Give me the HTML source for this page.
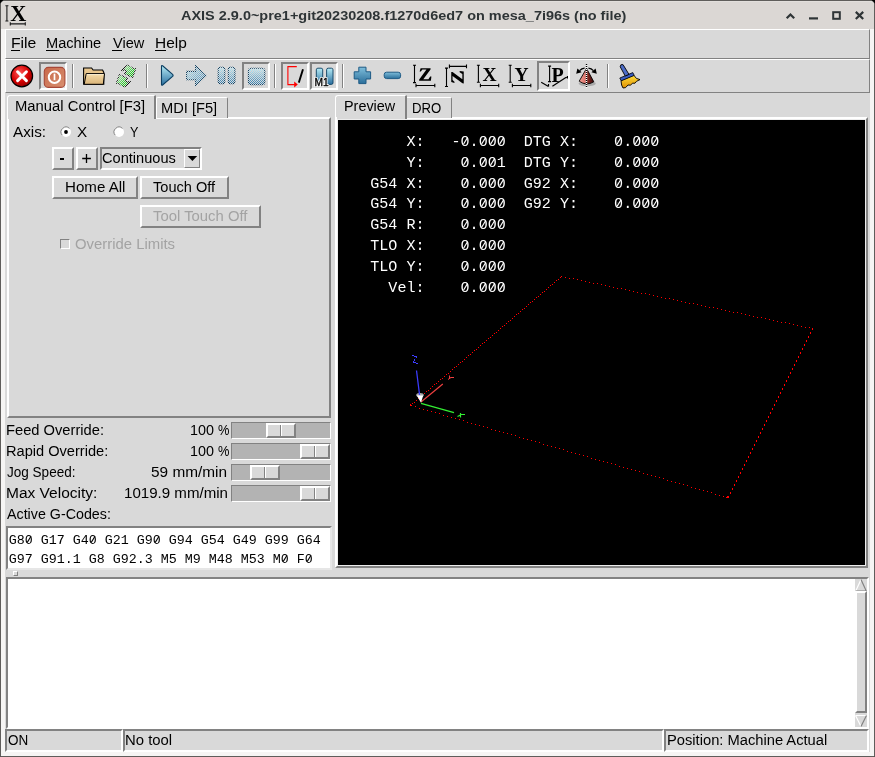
<!DOCTYPE html><html><head><meta charset="utf-8"><style>
html,body{margin:0;padding:0;width:875px;height:757px;overflow:hidden;background:#000}
body>div,body>svg{position:absolute;box-sizing:content-box}
.t{white-space:pre;line-height:20px;transform-origin:0 0}
svg{will-change:transform}
</style></head><body>
<div style="left:0;top:0;width:873px;height:755px;border:1px solid #5f5d5b;border-radius:5px 5px 0 0;background:#f6f5f4"></div>
<div style="left:1px;top:1px;width:873px;height:28px;border-radius:4px 4px 0 0;background:#dbd7d4;box-shadow:inset 0 1px 0 #e2dfdc"></div>
<svg style="position:absolute;left:0px;top:0px" width="40" height="29" viewBox="0 0 40 29"><text transform="translate(10.2,21) scale(0.93,1)" x="0" y="0" font-family="Liberation Serif" font-weight="bold" font-size="24" fill="#000">X</text>
<path d="M6.9 5.2v16.2M5.4 5.7h3M5.4 21h3M9.8 23.9h15.8M10.3 22.3v3.2M25.3 22.3v3.2" stroke="#1a1a1a" stroke-width="1.1" fill="none"/></svg>
<svg style="position:absolute;left:780px;top:5px" width="90" height="20" viewBox="0 0 90 20"><g stroke="#2e3436" stroke-width="2.2" fill="none" stroke-linecap="butt">
<path d="M6.7 13.3L10.45 9.5l3.75 3.8"/>
<path d="M29 13.4h9"/>
<rect x="53.2" y="7.2" width="6.6" height="6.6" stroke-width="2"/>
<path d="M75.8 6.9l7.4 7.1M83.2 6.9L75.8 14"/></g></svg>
<div style="left:5px;top:29px;width:865px;height:723px;background:#d9d9d9;"></div>
<div style="left:5px;top:29px;width:863px;height:28px;border:1px solid;border-color:#ffffff #828282 #828282 #ffffff;"></div>
<div style="left:11px;top:50px;width:9px;height:1px;background:#000;"></div>
<div style="left:46px;top:50px;width:13px;height:1px;background:#000;"></div>
<div style="left:112px;top:50px;width:10px;height:1px;background:#000;"></div>
<div style="left:155px;top:50px;width:11px;height:1px;background:#000;"></div>
<div style="left:5px;top:59px;width:863px;height:32px;border:1px solid;border-color:#ffffff #828282 #828282 #ffffff;"></div>
<div style="left:7px;top:117px;width:320px;height:297px;border:2px solid;border-color:#ffffff #828282 #828282 #ffffff;"></div>
<div style="left:7px;top:95px;width:146px;height:23px;background:#d9d9d9;border-top:1px solid #fff;border-left:1px solid #fff;border-right:2px solid #828282;border-top-left-radius:3px;border-top-right-radius:1px"></div>
<div style="left:8px;top:117px;width:146px;height:2px;background:#d9d9d9;"></div>
<div style="left:156px;top:97px;width:70px;height:20px;background:#d9d9d9;border-top:1px solid #fff;border-left:1px solid #fff;border-right:1px solid #828282;border-top-left-radius:2px;border-top-right-radius:2px"></div>
<svg style="position:absolute;left:59px;top:125px" width="14" height="14" viewBox="0 0 14 14"><circle cx="7" cy="7" r="5" fill="#fff"/><path d="M3.2 10.2A5 5 0 0 1 10.5 3.4" stroke="#828282" stroke-width="1" fill="none"/><circle cx="7" cy="7" r="1.9" fill="#000"/></svg>
<svg style="position:absolute;left:112px;top:125px" width="14" height="14" viewBox="0 0 14 14"><circle cx="7" cy="7" r="5" fill="#fff"/><path d="M3.2 10.2A5 5 0 0 1 10.5 3.4" stroke="#828282" stroke-width="1" fill="none"/></svg>
<div style="left:52px;top:147px;width:18px;height:19px;border:2px solid;border-color:#ffffff #828282 #828282 #ffffff;"></div>
<div style="left:60px;top:158px;width:4px;height:1.5px;background:#000;"></div>
<div style="left:76px;top:147px;width:18px;height:19px;border:2px solid;border-color:#ffffff #828282 #828282 #ffffff;"></div>
<svg style="position:absolute;left:76px;top:147px" width="22" height="23" viewBox="0 0 22 23"><path d="M6.2 11.5h8.7M10.5 7v9" stroke="#000" stroke-width="1.3"/></svg>
<div style="left:100px;top:147px;width:98px;height:19px;border:2px solid;border-color:#828282 #ffffff #ffffff #828282;"></div>
<div style="left:184px;top:149px;width:14px;height:17px;border:1px solid;border-color:#ffffff #828282 #828282 #ffffff;"></div>
<svg style="position:absolute;left:184px;top:149px" width="16" height="19" viewBox="0 0 16 19"><path d="M3.6 7h9.6l-4.8 5z" fill="#000"/></svg>
<div style="left:52px;top:176px;width:82px;height:19px;border:2px solid;border-color:#ffffff #828282 #828282 #ffffff;"></div>
<div style="left:140px;top:176px;width:85px;height:19px;border:2px solid;border-color:#ffffff #828282 #828282 #ffffff;"></div>
<div style="left:140px;top:205px;width:117px;height:19px;border:2px solid;border-color:#ffffff #828282 #828282 #ffffff;"></div>
<div style="left:60px;top:239px;width:8px;height:8px;border:1px solid;border-color:#828282 #ffffff #ffffff #828282;"></div>
<div style="left:231px;top:422px;width:98px;height:15px;border:1px solid;border-color:#828282 #ffffff #ffffff #828282;background:#b3b3b3;"></div>
<div style="left:266px;top:423px;width:26px;height:11px;border:2px solid;border-color:#ffffff #828282 #828282 #ffffff;background:#d9d9d9;"></div>
<div style="left:280px;top:425px;width:1px;height:11px;background:#828282;"></div>
<div style="left:281px;top:425px;width:1px;height:11px;background:#ffffff;"></div>
<div style="left:231px;top:443px;width:98px;height:15px;border:1px solid;border-color:#828282 #ffffff #ffffff #828282;background:#b3b3b3;"></div>
<div style="left:300px;top:444px;width:26px;height:11px;border:2px solid;border-color:#ffffff #828282 #828282 #ffffff;background:#d9d9d9;"></div>
<div style="left:314px;top:446px;width:1px;height:11px;background:#828282;"></div>
<div style="left:315px;top:446px;width:1px;height:11px;background:#ffffff;"></div>
<div style="left:231px;top:464px;width:98px;height:15px;border:1px solid;border-color:#828282 #ffffff #ffffff #828282;background:#b3b3b3;"></div>
<div style="left:250px;top:465px;width:26px;height:11px;border:2px solid;border-color:#ffffff #828282 #828282 #ffffff;background:#d9d9d9;"></div>
<div style="left:264px;top:467px;width:1px;height:11px;background:#828282;"></div>
<div style="left:265px;top:467px;width:1px;height:11px;background:#ffffff;"></div>
<div style="left:231px;top:485px;width:98px;height:15px;border:1px solid;border-color:#828282 #ffffff #ffffff #828282;background:#b3b3b3;"></div>
<div style="left:300px;top:486px;width:26px;height:11px;border:2px solid;border-color:#ffffff #828282 #828282 #ffffff;background:#d9d9d9;"></div>
<div style="left:314px;top:488px;width:1px;height:11px;background:#828282;"></div>
<div style="left:315px;top:488px;width:1px;height:11px;background:#ffffff;"></div>
<div style="left:6px;top:526px;width:322px;height:40px;border:2px solid;border-color:#828282 #e6e6e6 #e6e6e6 #828282;background:#fff;"></div>
<div style="left:13px;top:571px;width:3px;height:3px;border:1px solid;border-color:#ffffff #828282 #828282 #ffffff;"></div>
<div style="left:335px;top:117px;width:529px;height:447px;border:2px solid;border-color:#ffffff #828282 #828282 #ffffff;"></div>
<div style="left:337px;top:119px;width:529px;height:447px;background:#ececec;"></div>
<div style="left:338px;top:120px;width:527px;height:445px;background:#000;"></div>
<div style="left:335px;top:95px;width:69px;height:23px;background:#d9d9d9;border-top:1px solid #fff;border-left:1px solid #fff;border-right:2px solid #828282;border-top-left-radius:3px;border-top-right-radius:1px"></div>
<div style="left:336px;top:117px;width:69px;height:2px;background:#d9d9d9;"></div>
<div style="left:335px;top:117px;width:2px;height:3px;background:#fff;"></div>
<div style="left:407px;top:97px;width:44px;height:20px;background:#d9d9d9;border-top:1px solid #fff;border-right:1px solid #828282;border-top-right-radius:2px"></div>
<div style="left:6px;top:577px;width:859px;height:148px;border:2px solid;border-color:#828282 #ffffff #ffffff #828282;background:#fff;"></div>
<div style="left:855px;top:579px;width:12px;height:148px;background:#d9d9d9;"></div>
<svg style="position:absolute;left:855px;top:579px" width="12" height="13" viewBox="0 0 12 13"><path d="M0.5 12.5L6 0.5L11.5 12.5z" fill="#d9d9d9"/><path d="M0.5 12.5L6 0.5" stroke="#fff" stroke-width="1.2"/><path d="M6 0.5L11.5 12.5M0.5 12h11" stroke="#828282" stroke-width="1.2"/></svg>
<div style="left:855px;top:591px;width:8px;height:118px;border:2px solid;border-color:#ffffff #828282 #828282 #ffffff;background:#d9d9d9;"></div>
<svg style="position:absolute;left:855px;top:715px" width="12" height="12" viewBox="0 0 12 12"><path d="M0.5 0.5L6 11.5L11.5 0.5z" fill="#d9d9d9"/><path d="M0.5 0.5L6 11.5M0.5 0.5h11" stroke="#fff" stroke-width="1.2"/><path d="M11.5 0.5L6 11.5" stroke="#828282" stroke-width="1.2"/></svg>
<div style="left:5px;top:729px;width:114px;height:19px;border:2px solid;border-color:#828282 #ffffff #ffffff #828282;"></div>
<div style="left:123px;top:729px;width:537px;height:19px;border:2px solid;border-color:#828282 #ffffff #ffffff #828282;"></div>
<div style="left:664px;top:729px;width:201px;height:19px;border:2px solid;border-color:#828282 #ffffff #ffffff #828282;"></div>
<svg style="position:absolute;left:0;top:0" width="875" height="757" viewBox="0 0 875 757"><path d="M410 404h1v1h-1zM410 405h1v1h-1zM411 405h1v1h-1zM412 403h1v1h-1zM414 402h1v1h-1zM415 406h1v1h-1zM416 400h1v1h-1zM418 398h1v1h-1zM419 408h1v1h-1zM420 396h1v1h-1zM422 395h1v1h-1zM423 409h1v1h-1zM424 393h1v1h-1zM426 391h1v1h-1zM427 410h1v1h-1zM428 390h1v1h-1zM430 388h1v1h-1zM431 411h1v1h-1zM432 386h1v1h-1zM434 384h1v1h-1zM435 412h1v1h-1zM436 383h1v1h-1zM438 381h1v1h-1zM439 413h1v1h-1zM440 379h1v1h-1zM442 378h1v1h-1zM443 415h1v1h-1zM444 376h1v1h-1zM446 374h1v1h-1zM447 416h1v1h-1zM448 373h1v1h-1zM450 371h1v1h-1zM451 417h1v1h-1zM452 369h1v1h-1zM454 367h1v1h-1zM455 418h1v1h-1zM456 366h1v1h-1zM458 364h1v1h-1zM459 419h1v1h-1zM460 362h1v1h-1zM462 361h1v1h-1zM463 420h1v1h-1zM464 359h1v1h-1zM466 357h1v1h-1zM467 422h1v1h-1zM468 355h1v1h-1zM470 354h1v1h-1zM471 423h1v1h-1zM472 352h1v1h-1zM474 350h1v1h-1zM475 424h1v1h-1zM476 349h1v1h-1zM478 347h1v1h-1zM479 425h1v1h-1zM480 345h1v1h-1zM482 343h1v1h-1zM483 426h1v1h-1zM484 342h1v1h-1zM486 340h1v1h-1zM487 427h1v1h-1zM488 338h1v1h-1zM490 337h1v1h-1zM491 429h1v1h-1zM492 335h1v1h-1zM494 333h1v1h-1zM495 430h1v1h-1zM496 332h1v1h-1zM498 330h1v1h-1zM499 431h1v1h-1zM500 328h1v1h-1zM502 326h1v1h-1zM503 432h1v1h-1zM504 325h1v1h-1zM506 323h1v1h-1zM507 433h1v1h-1zM508 321h1v1h-1zM510 320h1v1h-1zM511 434h1v1h-1zM512 318h1v1h-1zM514 316h1v1h-1zM515 435h1v1h-1zM516 314h1v1h-1zM518 313h1v1h-1zM519 437h1v1h-1zM520 311h1v1h-1zM522 309h1v1h-1zM523 438h1v1h-1zM524 308h1v1h-1zM526 306h1v1h-1zM527 439h1v1h-1zM528 304h1v1h-1zM530 302h1v1h-1zM531 440h1v1h-1zM532 301h1v1h-1zM534 299h1v1h-1zM535 441h1v1h-1zM536 297h1v1h-1zM538 296h1v1h-1zM539 442h1v1h-1zM540 294h1v1h-1zM542 292h1v1h-1zM543 444h1v1h-1zM544 291h1v1h-1zM546 289h1v1h-1zM547 445h1v1h-1zM548 287h1v1h-1zM550 285h1v1h-1zM551 446h1v1h-1zM552 284h1v1h-1zM554 282h1v1h-1zM555 447h1v1h-1zM556 280h1v1h-1zM558 279h1v1h-1zM559 448h1v1h-1zM560 277h1v1h-1zM561 276h1v1h-1zM563 449h1v1h-1zM565 277h1v1h-1zM567 451h1v1h-1zM569 278h1v1h-1zM571 452h1v1h-1zM573 278h1v1h-1zM575 453h1v1h-1zM577 279h1v1h-1zM579 454h1v1h-1zM581 280h1v1h-1zM583 455h1v1h-1zM585 281h1v1h-1zM587 456h1v1h-1zM589 282h1v1h-1zM591 458h1v1h-1zM593 283h1v1h-1zM595 459h1v1h-1zM597 283h1v1h-1zM599 460h1v1h-1zM601 284h1v1h-1zM603 461h1v1h-1zM605 285h1v1h-1zM607 462h1v1h-1zM609 286h1v1h-1zM611 463h1v1h-1zM613 287h1v1h-1zM615 464h1v1h-1zM617 288h1v1h-1zM619 466h1v1h-1zM621 288h1v1h-1zM623 467h1v1h-1zM625 289h1v1h-1zM627 468h1v1h-1zM629 290h1v1h-1zM631 469h1v1h-1zM633 291h1v1h-1zM635 470h1v1h-1zM637 292h1v1h-1zM639 471h1v1h-1zM641 293h1v1h-1zM643 473h1v1h-1zM645 293h1v1h-1zM647 474h1v1h-1zM649 294h1v1h-1zM651 475h1v1h-1zM653 295h1v1h-1zM655 476h1v1h-1zM657 296h1v1h-1zM659 477h1v1h-1zM661 297h1v1h-1zM663 478h1v1h-1zM665 298h1v1h-1zM667 480h1v1h-1zM669 298h1v1h-1zM671 481h1v1h-1zM673 299h1v1h-1zM675 482h1v1h-1zM677 300h1v1h-1zM679 483h1v1h-1zM681 301h1v1h-1zM683 484h1v1h-1zM685 302h1v1h-1zM687 485h1v1h-1zM689 303h1v1h-1zM691 487h1v1h-1zM693 303h1v1h-1zM695 488h1v1h-1zM697 304h1v1h-1zM699 489h1v1h-1zM701 305h1v1h-1zM703 490h1v1h-1zM705 306h1v1h-1zM707 491h1v1h-1zM709 307h1v1h-1zM711 492h1v1h-1zM713 307h1v1h-1zM715 494h1v1h-1zM717 308h1v1h-1zM719 495h1v1h-1zM721 309h1v1h-1zM723 496h1v1h-1zM725 310h1v1h-1zM726 497h1v1h-1zM727 496h1v1h-1zM727 497h1v1h-1zM728 496h1v1h-1zM728 497h1v1h-1zM729 311h1v1h-1zM730 492h1v1h-1zM730 493h1v1h-1zM732 488h1v1h-1zM732 489h1v1h-1zM733 312h1v1h-1zM734 484h1v1h-1zM734 485h1v1h-1zM736 480h1v1h-1zM736 481h1v1h-1zM737 312h1v1h-1zM738 476h1v1h-1zM738 477h1v1h-1zM740 472h1v1h-1zM740 473h1v1h-1zM741 313h1v1h-1zM742 468h1v1h-1zM742 469h1v1h-1zM744 464h1v1h-1zM744 465h1v1h-1zM745 314h1v1h-1zM746 460h1v1h-1zM746 461h1v1h-1zM748 456h1v1h-1zM748 457h1v1h-1zM749 315h1v1h-1zM750 452h1v1h-1zM750 453h1v1h-1zM752 448h1v1h-1zM752 449h1v1h-1zM753 316h1v1h-1zM754 444h1v1h-1zM754 445h1v1h-1zM756 440h1v1h-1zM756 441h1v1h-1zM757 317h1v1h-1zM758 436h1v1h-1zM758 437h1v1h-1zM760 432h1v1h-1zM760 433h1v1h-1zM761 317h1v1h-1zM762 428h1v1h-1zM762 429h1v1h-1zM764 424h1v1h-1zM764 425h1v1h-1zM765 318h1v1h-1zM766 420h1v1h-1zM766 421h1v1h-1zM768 416h1v1h-1zM768 417h1v1h-1zM769 319h1v1h-1zM770 412h1v1h-1zM770 413h1v1h-1zM772 408h1v1h-1zM772 409h1v1h-1zM773 320h1v1h-1zM774 404h1v1h-1zM774 405h1v1h-1zM776 400h1v1h-1zM776 401h1v1h-1zM777 321h1v1h-1zM778 396h1v1h-1zM778 397h1v1h-1zM780 392h1v1h-1zM780 393h1v1h-1zM781 322h1v1h-1zM782 388h1v1h-1zM782 389h1v1h-1zM784 384h1v1h-1zM784 385h1v1h-1zM785 322h1v1h-1zM786 380h1v1h-1zM786 381h1v1h-1zM788 376h1v1h-1zM788 377h1v1h-1zM789 323h1v1h-1zM790 372h1v1h-1zM790 373h1v1h-1zM792 368h1v1h-1zM792 369h1v1h-1zM793 324h1v1h-1zM794 364h1v1h-1zM794 365h1v1h-1zM796 360h1v1h-1zM796 361h1v1h-1zM797 325h1v1h-1zM798 356h1v1h-1zM798 357h1v1h-1zM800 352h1v1h-1zM800 353h1v1h-1zM801 326h1v1h-1zM802 348h1v1h-1zM802 349h1v1h-1zM804 344h1v1h-1zM804 345h1v1h-1zM805 327h1v1h-1zM806 340h1v1h-1zM806 341h1v1h-1zM808 336h1v1h-1zM808 337h1v1h-1zM809 327h1v1h-1zM810 332h1v1h-1zM810 333h1v1h-1zM812 328h1v1h-1zM812 329h1v1h-1z" fill="#ff0000"/><path d="M416.5 370.5L419.5 394.5" stroke="#3c3cff" stroke-width="1.2" fill="none"/><path d="M412 355.5h2M414 356.5h3M416.5 357v1M415.5 358.5v0.1M414.5 359v2M413.5 361v2M414 362.5h2M416 363.5h2" stroke="#3c3cff" stroke-width="1" fill="none"/><path d="M421 402L442.8 384" stroke="#f04040" stroke-width="1.1" fill="none"/><path d="M449.5 375.5v2.5M448 379.5l3-2M450.5 377.5h3.5" stroke="#f04040" stroke-width="1" fill="none"/><path d="M421 403.3L454 412.6" stroke="#33ee33" stroke-width="1.3" fill="none"/><path d="M460.5 413v4.5M457.5 416.5l3-1.5M460.5 414.5h4.5" stroke="#33ee33" stroke-width="1.2" fill="none"/><ellipse cx="420" cy="395" rx="3.8" ry="2" fill="#a8a8a8"/><path d="M416.8 395.6L423.2 395.6L421 402.8z" fill="#ffffff"/><path d="M419.4 392.5v2.5" stroke="#3c3cff" stroke-width="1.2"/></svg>
<div style="left:39px;top:62px;width:24px;height:24px;border:2px solid;border-color:#828282 #ffffff #ffffff #828282;"></div>
<div style="left:242px;top:62px;width:24px;height:24px;border:2px solid;border-color:#828282 #ffffff #ffffff #828282;"></div>
<div style="left:281px;top:62px;width:24px;height:24px;border:2px solid;border-color:#828282 #ffffff #ffffff #828282;"></div>
<div style="left:310px;top:62px;width:24px;height:24px;border:2px solid;border-color:#828282 #ffffff #ffffff #828282;"></div>
<div style="left:537px;top:61px;width:29px;height:26px;border:2px solid;border-color:#828282 #ffffff #ffffff #828282;"></div>
<div style="left:72px;top:64px;width:1px;height:24px;background:#828282;"></div>
<div style="left:73px;top:64px;width:1px;height:24px;background:#ffffff;"></div>
<div style="left:146px;top:64px;width:1px;height:24px;background:#828282;"></div>
<div style="left:147px;top:64px;width:1px;height:24px;background:#ffffff;"></div>
<div style="left:274px;top:64px;width:1px;height:24px;background:#828282;"></div>
<div style="left:275px;top:64px;width:1px;height:24px;background:#ffffff;"></div>
<div style="left:342px;top:64px;width:1px;height:24px;background:#828282;"></div>
<div style="left:343px;top:64px;width:1px;height:24px;background:#ffffff;"></div>
<div style="left:607px;top:64px;width:1px;height:24px;background:#828282;"></div>
<div style="left:608px;top:64px;width:1px;height:24px;background:#ffffff;"></div>
<svg style="position:absolute;left:0;top:0" width="875" height="100" viewBox="0 0 875 100"><defs>
<pattern id="chk" patternUnits="userSpaceOnUse" width="2" height="2"><rect x="0" y="0" width="1" height="1" fill="#fff"/><rect x="1" y="1" width="1" height="1" fill="#fff"/></pattern>
<mask id="stip" maskUnits="userSpaceOnUse" x="0" y="0" width="875" height="757"><rect x="0" y="0" width="875" height="757" fill="url(#chk)"/></mask>
<pattern id="chk2" patternUnits="userSpaceOnUse" width="2" height="2"><rect x="1" y="0" width="1" height="1" fill="#fff"/><rect x="0" y="1" width="1" height="1" fill="#fff"/></pattern>
<mask id="stip2" maskUnits="userSpaceOnUse" x="0" y="0" width="875" height="757"><rect x="0" y="0" width="875" height="757" fill="url(#chk2)"/></mask>
<linearGradient id="gStip" x1="0" y1="0" x2="0" y2="1"><stop offset="0" stop-color="#c4f0fa"/><stop offset="1" stop-color="#2d78ab"/></linearGradient>
<linearGradient id="gStipD" x1="0" y1="0" x2="1" y2="1"><stop offset="0" stop-color="#c4f0fa"/><stop offset="1" stop-color="#2d78ab"/></linearGradient>
<linearGradient id="gPlay" x1="0" y1="0" x2="0" y2="1"><stop offset="0" stop-color="#b6ecf6"/><stop offset="1" stop-color="#2a6e9e"/></linearGradient>
<linearGradient id="gGreen" x1="0" y1="0" x2="1" y2="1"><stop offset="0" stop-color="#c8f5c8"/><stop offset="0.6" stop-color="#2ad42a"/><stop offset="1" stop-color="#00b000"/></linearGradient>
<radialGradient id="gRed" cx="0.4" cy="0.35" r="0.7"><stop offset="0" stop-color="#ff5a5a"/><stop offset="0.6" stop-color="#d40000"/><stop offset="1" stop-color="#8a0000"/></radialGradient>
<linearGradient id="gPow" x1="0" y1="0" x2="1" y2="1"><stop offset="0" stop-color="#c8684a"/><stop offset="1" stop-color="#d89070"/></linearGradient>
<linearGradient id="gBlue" x1="0" y1="0" x2="1" y2="1"><stop offset="0" stop-color="#9fd3ea"/><stop offset="1" stop-color="#1d5f8e"/></linearGradient>
<linearGradient id="gBlueV" x1="0" y1="0" x2="0" y2="1"><stop offset="0" stop-color="#7fbedb"/><stop offset="1" stop-color="#2a6e9a"/></linearGradient>
<linearGradient id="gFold" x1="0" y1="0" x2="0" y2="1"><stop offset="0" stop-color="#f6dcaa"/><stop offset="1" stop-color="#d9b478"/></linearGradient>
<linearGradient id="gCone" x1="0" y1="0" x2="1" y2="0"><stop offset="0" stop-color="#f4a096"/><stop offset="0.45" stop-color="#d87068"/><stop offset="0.55" stop-color="#8a2a22"/><stop offset="1" stop-color="#3a0808"/></linearGradient>
<linearGradient id="gBrush" x1="0" y1="0" x2="0" y2="1"><stop offset="0" stop-color="#ffe040"/><stop offset="1" stop-color="#e09000"/></linearGradient>
</defs><circle cx="21.8" cy="76" r="10.8" fill="url(#gRed)" stroke="#000" stroke-width="1.2"/><path d="M17.6 71.8L26.4 80.6M26.4 71.8L17.6 80.6" stroke="#fff" stroke-width="3" stroke-linecap="round"/><rect x="44.3" y="67.4" width="20.6" height="20" rx="4" fill="url(#gPow)" stroke="#a84838" stroke-width="1.1"/><circle cx="54.5" cy="77.3" r="5.7" fill="none" stroke="#fff" stroke-width="2"/><path d="M54.5 73.6v6.6" stroke="#fff" stroke-width="1.7"/><path d="M83.6 68h8l1.5 2h9.5l1.2 2.5V84.3H83.6z" fill="#e8c68e" stroke="#000" stroke-width="1.1"/><path d="M86.2 73.6h18.3l-1.2 10.7H84.2z" fill="url(#gFold)" stroke="#000" stroke-width="1"/><path d="M86.8 74.6h16.8" stroke="#fff6e0" stroke-width="0.8"/><g mask="url(#stip2)"><path d="M121.4 70.6L126.6 65.3L128.8 65.3L133.4 68.6L135.8 68.6L132.6 77.6L124.4 73.6L126.4 71.6L124.4 69.6L123.2 70.6Z" fill="url(#gGreen)" stroke="#111" stroke-width="1"/><path d="M130.6 81.4L125.4 86.7L123.2 86.7L118.6 83.4L116.2 83.4L119.4 74.4L127.6 78.4L125.6 80.4L127.6 82.4L128.8 81.4Z" fill="url(#gGreen)" stroke="#111" stroke-width="1"/></g><path d="M161.5 66.2Q161.5 65 162.6 65.8L172.6 74.4Q173.6 75.4 172.6 76.4L162.6 85Q161.5 85.8 161.5 84.6z" fill="url(#gPlay)" stroke="#0b3f62" stroke-width="1.1"/><path d="M186.6 71.4h9v-5.6l10.6 9.6-10.6 10.2v-5.8h-9z" fill="url(#gStipD)" stroke="#0b3f62" stroke-width="1.1" mask="url(#stip)"/><g mask="url(#stip)"><rect x="218.2" y="67.2" width="6.6" height="16.6" rx="2" fill="url(#gStip)" stroke="#0b3f62" stroke-width="1.1"/><rect x="228.3" y="67.2" width="6.6" height="16.6" rx="2" fill="url(#gStip)" stroke="#0b3f62" stroke-width="1.1"/></g><rect x="248.4" y="68.3" width="16.4" height="16.4" rx="2.5" fill="url(#gStip)" stroke="#0b3f62" stroke-width="1.1" mask="url(#stip)"/><path d="M296.8 66.6h-8.9v18h7.4" stroke="#ff0000" stroke-width="1.1" fill="none"/><path d="M294.2 81.6l3.6 3-3.6 3z" fill="#ff0000"/><path d="M303 69.3L298.8 82.6" stroke="#000" stroke-width="1.9"/><rect x="316.3" y="68.2" width="6.4" height="16.2" rx="1.6" fill="url(#gPlay)" stroke="#0b3f62" stroke-width="0.9"/><rect x="326.6" y="68.2" width="6.4" height="16.2" rx="1.6" fill="url(#gPlay)" stroke="#0b3f62" stroke-width="0.9"/><text x="314.4" y="85.6" font-family="Liberation Sans" font-size="10.2" fill="#fff" stroke="#fff" stroke-width="2" stroke-linejoin="round">M1</text><text x="314.4" y="85.6" font-family="Liberation Sans" font-size="10.2" fill="#000" stroke="#000" stroke-width="0.35">M1</text><path d="M358.8 67.2h7.2v4.6h4.6v7.2h-4.6v4.6h-7.2v-4.6h-4.6v-7.2h4.6z" fill="url(#gBlueV)" stroke="#1d5a85" stroke-width="1" stroke-linejoin="round"/><rect x="384.2" y="72.2" width="16.4" height="6.4" rx="2.4" fill="url(#gBlueV)" stroke="#1d5a85" stroke-width="1"/><path d="M414.5 65.2v17.39999999999999M413.0 65.2h3M413.0 82.6h3" stroke="#000" stroke-width="1.1" fill="none"/><path d="M416 85.5h18.80000000000001M416 83.7v3.6M434.8 83.7v3.6" stroke="#000" stroke-width="1.1" fill="none"/><path d="M420.6 68.2H430.6L430.5 69.5L423.3 79.3H428.4L430.2 76.6H431.4L430.9 80.7H419.1L419.2 79.4L426.5 69.5H422.4L420.8 71.4H419.6Z" fill="#000"/><path d="M446.5 68.1v18.400000000000006M445.0 68.1h3M445.0 86.5h3" stroke="#000" stroke-width="1.1" fill="none"/><path d="M449.4 66.4h17.100000000000023M449.4 64.60000000000001v3.6M466.5 64.60000000000001v3.6" stroke="#000" stroke-width="1.1" fill="none"/><path transform="translate(457.45,77.2) rotate(-90) translate(-425.3,-74.4)" d="M420.6 68.2H430.6L430.5 69.5L423.3 79.3H428.4L430.2 76.6H431.4L430.9 80.7H419.1L419.2 79.4L426.5 69.5H422.4L420.8 71.4H419.6Z" fill="#000"/><path d="M478.4 65.3v17.0M476.9 65.3h3M476.9 82.3h3" stroke="#000" stroke-width="1.1" fill="none"/><path d="M480.4 85.5h18.30000000000001M480.4 83.7v3.6M498.7 83.7v3.6" stroke="#000" stroke-width="1.1" fill="none"/><text x="482.6" y="80.8" font-family="Liberation Serif" font-weight="bold" font-size="19.5" fill="#000">X</text><path d="M510.2 65.3v17.0M508.7 65.3h3M508.7 82.3h3" stroke="#000" stroke-width="1.1" fill="none"/><path d="M512.4 85.5h18.399999999999977M512.4 83.7v3.6M530.8 83.7v3.6" stroke="#000" stroke-width="1.1" fill="none"/><text x="514.6" y="80.8" font-family="Liberation Serif" font-weight="bold" font-size="19.5" fill="#000">Y</text><path d="M549.6 66.1v15.5M548.1 66.1h3M548.1 81.6h3" stroke="#000" stroke-width="1.1" fill="none"/><text x="551.6" y="81.6" font-family="Liberation Serif" font-weight="bold" font-size="20" fill="#000">P</text><path d="M541.2 82.2l7.3 4.2M548.5 84v2.6M552.4 86.2l15-9.8M567.4 76v2.4" stroke="#000" stroke-width="1.2" fill="none"/><ellipse cx="587.2" cy="83.6" rx="8.6" ry="2.6" fill="#000" opacity="0.22"/><path d="M586.5 68.4L579.2 81.2Q586.5 86.4 593.8 81.8Z" fill="url(#gCone)" stroke="#000" stroke-width="0.9" stroke-linejoin="round"/><path d="M586.5 64v24" stroke="#fff" stroke-width="1.4"/><path d="M586.5 64v24" stroke="#000" stroke-width="1.4" stroke-dasharray="1 1"/><path d="M584.6 68.2Q581.6 68.4 579.6 70.6M588.4 68.2Q591.4 68.4 593.4 70.6" stroke="#000" stroke-width="1.3" fill="none"/><path d="M576.2 73.8L577.4 68.6L581.6 72.2ZM596.8 73.8L595.6 68.6L591.4 72.2Z" fill="#000"/><path d="M621 80.6L633.8 75.2L636.4 78.4L640 79.6L636.4 81.4L635 83.2L632.4 83.2L630.6 85.2L628 85L625.6 87.6L623 88L621.6 85Z" fill="url(#gBrush)" stroke="#000" stroke-width="0.9" stroke-linejoin="round"/><path d="M619.8 78L632.8 72.6L634.2 75.4L621.2 80.8Z" fill="#3a5cc0" stroke="#000" stroke-width="0.8"/><path d="M620.2 66.8Q620.2 63.8 623 64.6L629 74.4L625.2 76Z" fill="#4c6cc8" stroke="#000" stroke-width="0.9" stroke-linejoin="round"/></svg>
<div class="t" style="left:181.20px;top:6.00px;font-family:'Liberation Sans', sans-serif;font-size:13.5px;font-weight:bold;color:#2e3436;transform:scaleX(1.0711);">AXIS 2.9.0~pre1+git20230208.f1270d6ed7 on mesa_7i96s (no file)</div>
<div class="t" style="left:11.18px;top:33.00px;font-family:'Liberation Sans', sans-serif;font-size:14px;color:#000;transform:scaleX(1.1238);">File</div>
<div class="t" style="left:46.26px;top:33.00px;font-family:'Liberation Sans', sans-serif;font-size:14px;color:#000;transform:scaleX(1.0423);">Machine</div>
<div class="t" style="left:112.80px;top:33.00px;font-family:'Liberation Sans', sans-serif;font-size:14px;color:#000;transform:scaleX(1.0400);">View</div>
<div class="t" style="left:155.10px;top:33.00px;font-family:'Liberation Sans', sans-serif;font-size:14px;color:#000;transform:scaleX(1.1037);">Help</div>
<div class="t" style="left:15.44px;top:96.00px;font-family:'Liberation Sans', sans-serif;font-size:14px;color:#000;transform:scaleX(1.0579);">Manual Control [F3]</div>
<div class="t" style="left:160.55px;top:98.00px;font-family:'Liberation Sans', sans-serif;font-size:14px;color:#000;transform:scaleX(1.0462);">MDI [F5]</div>
<div class="t" style="left:13.00px;top:122.00px;font-family:'Liberation Sans', sans-serif;font-size:14px;color:#000;transform:scaleX(1.0897);">Axis:</div>
<div class="t" style="left:77.11px;top:122.00px;font-family:'Liberation Sans', sans-serif;font-size:14px;color:#000;transform:scaleX(1.0875);">X</div>
<div class="t" style="left:130.30px;top:122.00px;font-family:'Liberation Sans', sans-serif;font-size:14px;color:#000;transform:scaleX(0.9000);">Y</div>
<div class="t" style="left:102.26px;top:148.00px;font-family:'Liberation Sans', sans-serif;font-size:14px;color:#000;transform:scaleX(1.0420);">Continuous</div>
<div class="t" style="left:64.62px;top:177.00px;font-family:'Liberation Sans', sans-serif;font-size:14px;color:#000;transform:scaleX(1.0796);">Home All</div>
<div class="t" style="left:153.40px;top:177.00px;font-family:'Liberation Sans', sans-serif;font-size:14px;color:#000;transform:scaleX(1.0417);">Touch Off</div>
<div class="t" style="left:153.40px;top:206.00px;font-family:'Liberation Sans', sans-serif;font-size:14px;color:#a3a3a3;transform:scaleX(1.0618);">Tool Touch Off</div>
<div class="t" style="left:74.54px;top:234.00px;font-family:'Liberation Sans', sans-serif;font-size:14px;color:#a3a3a3;transform:scaleX(1.0624);">Override Limits</div>
<div class="t" style="left:6.35px;top:420.00px;font-family:'Liberation Sans', sans-serif;font-size:14px;color:#000;transform:scaleX(1.0495);">Feed Override:</div>
<div class="t" style="left:190.37px;top:420.00px;font-family:'Liberation Sans', sans-serif;font-size:14px;color:#000;transform:scaleX(1.0273);">100</div>
<div class="t" style="left:218.00px;top:420.00px;font-family:'Liberation Sans', sans-serif;font-size:14px;color:#000;transform:scaleX(0.9167);">%</div>
<div class="t" style="left:6.36px;top:441.00px;font-family:'Liberation Sans', sans-serif;font-size:14px;color:#000;transform:scaleX(1.0427);">Rapid Override:</div>
<div class="t" style="left:190.37px;top:441.00px;font-family:'Liberation Sans', sans-serif;font-size:14px;color:#000;transform:scaleX(1.0273);">100</div>
<div class="t" style="left:218.00px;top:441.00px;font-family:'Liberation Sans', sans-serif;font-size:14px;color:#000;transform:scaleX(0.9167);">%</div>
<div class="t" style="left:6.90px;top:462.00px;font-family:'Liberation Sans', sans-serif;font-size:14px;color:#000;transform:scaleX(0.9671);">Jog Speed:</div>
<div class="t" style="left:151.40px;top:462.00px;font-family:'Liberation Sans', sans-serif;font-size:14px;color:#000;transform:scaleX(1.0985);">59 mm/min</div>
<div class="t" style="left:6.29px;top:483.00px;font-family:'Liberation Sans', sans-serif;font-size:14px;color:#000;transform:scaleX(1.1075);">Max Velocity:</div>
<div class="t" style="left:123.72px;top:483.00px;font-family:'Liberation Sans', sans-serif;font-size:14px;color:#000;transform:scaleX(1.0779);">1019.9 mm/min</div>
<div class="t" style="left:7.40px;top:504.00px;font-family:'Liberation Sans', sans-serif;font-size:14px;color:#000;transform:scaleX(1.0188);">Active G-Codes:</div>
<div class="t" style="left:8.80px;top:531.00px;font-family:'Liberation Mono', monospace;font-size:13.33px;color:#000;transform:scaleX(1.0000);">G80 G17 G40 G21 G90 G94 G54 G49 G99 G64</div>
<div class="t" style="left:8.80px;top:550.00px;font-family:'Liberation Mono', monospace;font-size:13.33px;color:#000;transform:scaleX(1.0000);">G97 G91.1 G8 G92.3 M5 M9 M48 M53 M0 F0</div>
<div class="t" style="left:343.57px;top:96.00px;font-family:'Liberation Sans', sans-serif;font-size:14px;color:#000;transform:scaleX(1.0286);">Preview</div>
<div class="t" style="left:411.56px;top:98.00px;font-family:'Liberation Sans', sans-serif;font-size:14px;color:#000;transform:scaleX(0.9400);">DRO</div>
<div class="t" style="left:7.84px;top:730.00px;font-family:'Liberation Sans', sans-serif;font-size:14px;color:#000;transform:scaleX(0.9632);">ON</div>
<div class="t" style="left:125.44px;top:730.00px;font-family:'Liberation Sans', sans-serif;font-size:14px;color:#000;transform:scaleX(1.0628);">No tool</div>
<div class="t" style="left:666.65px;top:730.00px;font-family:'Liberation Sans', sans-serif;font-size:14px;color:#000;transform:scaleX(1.0503);">Position: Machine Actual</div>
<div class="t" style="left:370.30px;top:132.00px;font-family:'Liberation Mono', monospace;font-size:15.05px;color:#fff;transform:scaleX(1.0000);">    X:   -0.000  DTG X:    0.000</div>
<div class="t" style="left:370.30px;top:153.00px;font-family:'Liberation Mono', monospace;font-size:15.05px;color:#fff;transform:scaleX(1.0000);">    Y:    0.001  DTG Y:    0.000</div>
<div class="t" style="left:370.30px;top:173.60px;font-family:'Liberation Mono', monospace;font-size:15.05px;color:#fff;transform:scaleX(1.0000);">G54 X:    0.000  G92 X:    0.000</div>
<div class="t" style="left:370.30px;top:194.30px;font-family:'Liberation Mono', monospace;font-size:15.05px;color:#fff;transform:scaleX(1.0000);">G54 Y:    0.000  G92 Y:    0.000</div>
<div class="t" style="left:370.30px;top:215.20px;font-family:'Liberation Mono', monospace;font-size:15.05px;color:#fff;transform:scaleX(1.0000);">G54 R:    0.000</div>
<div class="t" style="left:370.30px;top:236.20px;font-family:'Liberation Mono', monospace;font-size:15.05px;color:#fff;transform:scaleX(1.0000);">TLO X:    0.000</div>
<div class="t" style="left:370.30px;top:257.20px;font-family:'Liberation Mono', monospace;font-size:15.05px;color:#fff;transform:scaleX(1.0000);">TLO Y:    0.000</div>
<div class="t" style="left:370.30px;top:278.00px;font-family:'Liberation Mono', monospace;font-size:15.05px;color:#fff;transform:scaleX(1.0000);">  Vel:    0.000</div>
<svg style="position:absolute;left:0;top:0" width="875" height="757" viewBox="0 0 875 757"><rect x="27.50" y="538.10" width="2.6" height="2.8" fill="#fff"/><path d="M31.00 536.30L27.10 542.60" stroke="#000" stroke-width="1.1"/><rect x="91.50" y="538.10" width="2.6" height="2.8" fill="#fff"/><path d="M95.00 536.30L91.10 542.60" stroke="#000" stroke-width="1.1"/><rect x="155.50" y="538.10" width="2.6" height="2.8" fill="#fff"/><path d="M159.00 536.30L155.10 542.60" stroke="#000" stroke-width="1.1"/><rect x="283.50" y="557.10" width="2.6" height="2.8" fill="#fff"/><path d="M287.00 555.30L283.10 561.60" stroke="#000" stroke-width="1.1"/><rect x="307.50" y="557.10" width="2.6" height="2.8" fill="#fff"/><path d="M311.00 555.30L307.10 561.60" stroke="#000" stroke-width="1.1"/></svg>
<svg style="position:absolute;left:0;top:0" width="875" height="757" viewBox="0 0 875 757"><rect x="463.80" y="139.30" width="2.9" height="3.2" fill="#000"/><path d="M467.50 137.60L463.60 144.00" stroke="#fff" stroke-width="1.15"/><rect x="481.86" y="139.30" width="2.9" height="3.2" fill="#000"/><path d="M485.56 137.60L481.66 144.00" stroke="#fff" stroke-width="1.15"/><rect x="490.89" y="139.30" width="2.9" height="3.2" fill="#000"/><path d="M494.59 137.60L490.69 144.00" stroke="#fff" stroke-width="1.15"/><rect x="499.92" y="139.30" width="2.9" height="3.2" fill="#000"/><path d="M503.62 137.60L499.72 144.00" stroke="#fff" stroke-width="1.15"/><rect x="617.31" y="139.30" width="2.9" height="3.2" fill="#000"/><path d="M621.01 137.60L617.11 144.00" stroke="#fff" stroke-width="1.15"/><rect x="635.37" y="139.30" width="2.9" height="3.2" fill="#000"/><path d="M639.07 137.60L635.17 144.00" stroke="#fff" stroke-width="1.15"/><rect x="644.40" y="139.30" width="2.9" height="3.2" fill="#000"/><path d="M648.10 137.60L644.20 144.00" stroke="#fff" stroke-width="1.15"/><rect x="653.43" y="139.30" width="2.9" height="3.2" fill="#000"/><path d="M657.13 137.60L653.23 144.00" stroke="#fff" stroke-width="1.15"/><rect x="463.80" y="160.30" width="2.9" height="3.2" fill="#000"/><path d="M467.50 158.60L463.60 165.00" stroke="#fff" stroke-width="1.15"/><rect x="481.86" y="160.30" width="2.9" height="3.2" fill="#000"/><path d="M485.56 158.60L481.66 165.00" stroke="#fff" stroke-width="1.15"/><rect x="490.89" y="160.30" width="2.9" height="3.2" fill="#000"/><path d="M494.59 158.60L490.69 165.00" stroke="#fff" stroke-width="1.15"/><rect x="617.31" y="160.30" width="2.9" height="3.2" fill="#000"/><path d="M621.01 158.60L617.11 165.00" stroke="#fff" stroke-width="1.15"/><rect x="635.37" y="160.30" width="2.9" height="3.2" fill="#000"/><path d="M639.07 158.60L635.17 165.00" stroke="#fff" stroke-width="1.15"/><rect x="644.40" y="160.30" width="2.9" height="3.2" fill="#000"/><path d="M648.10 158.60L644.20 165.00" stroke="#fff" stroke-width="1.15"/><rect x="653.43" y="160.30" width="2.9" height="3.2" fill="#000"/><path d="M657.13 158.60L653.23 165.00" stroke="#fff" stroke-width="1.15"/><rect x="463.80" y="180.90" width="2.9" height="3.2" fill="#000"/><path d="M467.50 179.20L463.60 185.60" stroke="#fff" stroke-width="1.15"/><rect x="481.86" y="180.90" width="2.9" height="3.2" fill="#000"/><path d="M485.56 179.20L481.66 185.60" stroke="#fff" stroke-width="1.15"/><rect x="490.89" y="180.90" width="2.9" height="3.2" fill="#000"/><path d="M494.59 179.20L490.69 185.60" stroke="#fff" stroke-width="1.15"/><rect x="499.92" y="180.90" width="2.9" height="3.2" fill="#000"/><path d="M503.62 179.20L499.72 185.60" stroke="#fff" stroke-width="1.15"/><rect x="617.31" y="180.90" width="2.9" height="3.2" fill="#000"/><path d="M621.01 179.20L617.11 185.60" stroke="#fff" stroke-width="1.15"/><rect x="635.37" y="180.90" width="2.9" height="3.2" fill="#000"/><path d="M639.07 179.20L635.17 185.60" stroke="#fff" stroke-width="1.15"/><rect x="644.40" y="180.90" width="2.9" height="3.2" fill="#000"/><path d="M648.10 179.20L644.20 185.60" stroke="#fff" stroke-width="1.15"/><rect x="653.43" y="180.90" width="2.9" height="3.2" fill="#000"/><path d="M657.13 179.20L653.23 185.60" stroke="#fff" stroke-width="1.15"/><rect x="463.80" y="201.60" width="2.9" height="3.2" fill="#000"/><path d="M467.50 199.90L463.60 206.30" stroke="#fff" stroke-width="1.15"/><rect x="481.86" y="201.60" width="2.9" height="3.2" fill="#000"/><path d="M485.56 199.90L481.66 206.30" stroke="#fff" stroke-width="1.15"/><rect x="490.89" y="201.60" width="2.9" height="3.2" fill="#000"/><path d="M494.59 199.90L490.69 206.30" stroke="#fff" stroke-width="1.15"/><rect x="499.92" y="201.60" width="2.9" height="3.2" fill="#000"/><path d="M503.62 199.90L499.72 206.30" stroke="#fff" stroke-width="1.15"/><rect x="617.31" y="201.60" width="2.9" height="3.2" fill="#000"/><path d="M621.01 199.90L617.11 206.30" stroke="#fff" stroke-width="1.15"/><rect x="635.37" y="201.60" width="2.9" height="3.2" fill="#000"/><path d="M639.07 199.90L635.17 206.30" stroke="#fff" stroke-width="1.15"/><rect x="644.40" y="201.60" width="2.9" height="3.2" fill="#000"/><path d="M648.10 199.90L644.20 206.30" stroke="#fff" stroke-width="1.15"/><rect x="653.43" y="201.60" width="2.9" height="3.2" fill="#000"/><path d="M657.13 199.90L653.23 206.30" stroke="#fff" stroke-width="1.15"/><rect x="463.80" y="222.50" width="2.9" height="3.2" fill="#000"/><path d="M467.50 220.80L463.60 227.20" stroke="#fff" stroke-width="1.15"/><rect x="481.86" y="222.50" width="2.9" height="3.2" fill="#000"/><path d="M485.56 220.80L481.66 227.20" stroke="#fff" stroke-width="1.15"/><rect x="490.89" y="222.50" width="2.9" height="3.2" fill="#000"/><path d="M494.59 220.80L490.69 227.20" stroke="#fff" stroke-width="1.15"/><rect x="499.92" y="222.50" width="2.9" height="3.2" fill="#000"/><path d="M503.62 220.80L499.72 227.20" stroke="#fff" stroke-width="1.15"/><rect x="463.80" y="243.50" width="2.9" height="3.2" fill="#000"/><path d="M467.50 241.80L463.60 248.20" stroke="#fff" stroke-width="1.15"/><rect x="481.86" y="243.50" width="2.9" height="3.2" fill="#000"/><path d="M485.56 241.80L481.66 248.20" stroke="#fff" stroke-width="1.15"/><rect x="490.89" y="243.50" width="2.9" height="3.2" fill="#000"/><path d="M494.59 241.80L490.69 248.20" stroke="#fff" stroke-width="1.15"/><rect x="499.92" y="243.50" width="2.9" height="3.2" fill="#000"/><path d="M503.62 241.80L499.72 248.20" stroke="#fff" stroke-width="1.15"/><rect x="463.80" y="264.50" width="2.9" height="3.2" fill="#000"/><path d="M467.50 262.80L463.60 269.20" stroke="#fff" stroke-width="1.15"/><rect x="481.86" y="264.50" width="2.9" height="3.2" fill="#000"/><path d="M485.56 262.80L481.66 269.20" stroke="#fff" stroke-width="1.15"/><rect x="490.89" y="264.50" width="2.9" height="3.2" fill="#000"/><path d="M494.59 262.80L490.69 269.20" stroke="#fff" stroke-width="1.15"/><rect x="499.92" y="264.50" width="2.9" height="3.2" fill="#000"/><path d="M503.62 262.80L499.72 269.20" stroke="#fff" stroke-width="1.15"/><rect x="463.80" y="285.30" width="2.9" height="3.2" fill="#000"/><path d="M467.50 283.60L463.60 290.00" stroke="#fff" stroke-width="1.15"/><rect x="481.86" y="285.30" width="2.9" height="3.2" fill="#000"/><path d="M485.56 283.60L481.66 290.00" stroke="#fff" stroke-width="1.15"/><rect x="490.89" y="285.30" width="2.9" height="3.2" fill="#000"/><path d="M494.59 283.60L490.69 290.00" stroke="#fff" stroke-width="1.15"/><rect x="499.92" y="285.30" width="2.9" height="3.2" fill="#000"/><path d="M503.62 283.60L499.72 290.00" stroke="#fff" stroke-width="1.15"/></svg>
</body></html>
